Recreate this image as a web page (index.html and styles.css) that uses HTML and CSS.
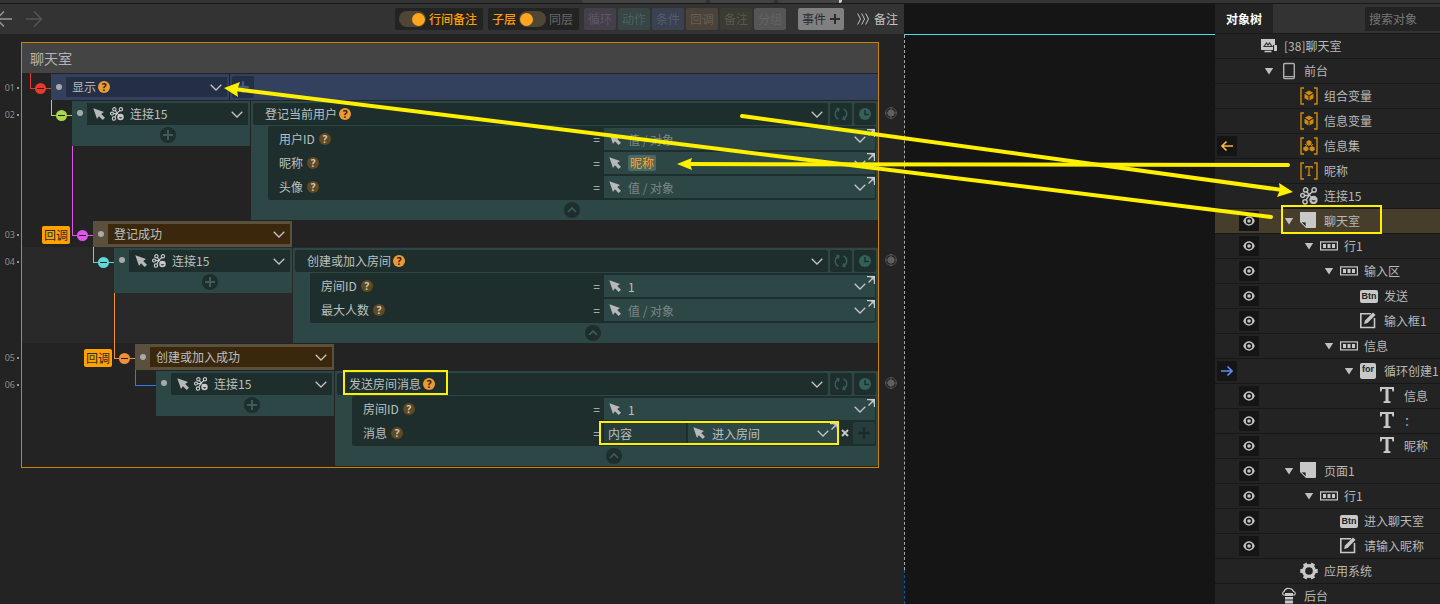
FILE: index.html
```html
<!DOCTYPE html>
<html lang="zh-CN">
<head>
<meta charset="utf-8">
<title>聊天室 - 事件编辑</title>
<link rel="stylesheet" href="styles.css">
</head>
<body>
<svg class="sprite" aria-hidden="true">
  <symbol id="chev" viewBox="0 0 12 7"><path d="M.7.8 6 6 11.300.8" fill="none" stroke="currentColor" stroke-width="1.3"/></symbol>
  <symbol id="cursor" viewBox="0 0 12 12"><path d="M.3.3 11 4 8.200 5.900 12 9.700 9.700 12 5.900 8.200 4 11Z" fill="currentColor"/></symbol>
  <symbol id="link" viewBox="0 0 16 16"><g fill="none" stroke="currentColor" stroke-width="1.300"><circle cx="5" cy="2.600" r="1.900"/><circle cx="12.500" cy="2.600" r="1.900"/><circle cx="2.300" cy="7.500" r="1.700"/><circle cx="4.500" cy="13.200" r="1.900"/><path d="M6 4 8 6.800 11.300 4M4.200 7.500H9M5.500 11.500 8.200 7"/></g><circle cx="12" cy="11.500" r="3.700" fill="currentColor"/><path d="M10 11.700Q12 14.500 14 11.700Z" fill="#222"/><path d="M8 6.500 10 9" stroke="currentColor"/></symbol>
  <symbol id="plus" viewBox="0 0 12 12"><path d="M6 1V11M1 6H11" stroke="currentColor" stroke-width="2"/></symbol>
  <symbol id="up" viewBox="0 0 16 16"><path d="M4 10 8 6l4 4" fill="none" stroke="currentColor" stroke-width="1.700"/></symbol>
  <symbol id="corner" viewBox="0 0 8 8"><path d="M0 .5H7.500V8M7 1 1.500 6.500" fill="none" stroke="currentColor" stroke-width="1.300"/><path d="M3 1H7V5Z" fill="currentColor" opacity=".6"/></symbol>
  <symbol id="loop" viewBox="0 0 14 14"><path d="M4.500 12.200A5.500 5.500 0 0 1 4 2.400M9.500 1.800A5.500 5.500 0 0 1 10 11.600M2.500 1.200 5 2 4.200 4.600M11.500 12.800 9 12 9.800 9.400" fill="none" stroke="currentColor" stroke-width="1.400"/></symbol>
  <symbol id="clock" viewBox="0 0 14 14"><circle cx="7" cy="7" r="6" fill="currentColor"/><path d="M7 3V7.500H11" fill="none" stroke="#1e2e2d" stroke-width="1.500"/></symbol>
  <symbol id="mark" viewBox="0 0 12 12"><circle cx="6" cy="6" r="5.400" fill="none" stroke="#505050"/><circle cx="6" cy="6" r="3.500" fill="#606060"/><path d="M6 0V12M0 6H12" stroke="#606060" stroke-width=".8"/></symbol>
  <symbol id="eye" viewBox="0 0 14 12"><path d="M1.200 6C3.500-.2 10.500-.2 12.800 6 10.500 12.200 3.500 12.200 1.200 6Z" fill="#c4c4c4"/><circle cx="7" cy="6" r="3.200" fill="#151515"/><circle cx="7" cy="6" r="1.800" fill="#c4c4c4"/></symbol>
  <symbol id="tri" viewBox="0 0 10 8"><path d="M.8 1H9.200L5 7.500Z" fill="#c0c0c0"/></symbol>
  <symbol id="project" viewBox="0 0 18 16"><path d="M1 1H15V7H13V12H1Z" fill="#c8c8c8"/><path d="M4 8.500 6.500 5 8 7 9.500 5 12 8.500Z" fill="none" stroke="#333" stroke-width="1.200"/><path d="M4.500 13.500H11.500" stroke="#c8c8c8" stroke-width="1.500"/><rect x="14" y="7" width="3" height="6" rx=".5" fill="#c8c8c8"/></symbol>
  <symbol id="phone" viewBox="0 0 18 18"><rect x="3.700" y="1.500" width="10.600" height="15" rx="1" fill="none" stroke="#b0b0b0" stroke-width="1.400"/><path d="M4 14.500H14" stroke="#b0b0b0"/></symbol>
  <symbol id="cubevar" viewBox="0 0 18 18"><path d="M4 1H1V17H4M14 1H17V17H14" fill="none" stroke="#d08a0c" stroke-width="1.400"/><path d="M9 3.500 13.200 5.800 9 8.200 4.800 5.800ZM4.500 6.800 8.500 9V13.500L4.500 11.300ZM13.500 6.800 9.500 9V13.500L13.500 11.300Z" fill="#d08a0c"/></symbol>
  <symbol id="setvar" viewBox="0 0 18 18"><path d="M4 1H1V17H4M14 1H17V17H14" fill="none" stroke="#d08a0c" stroke-width="1.400"/><path d="M9 3 11.500 4.500V7.500L9 9 6.500 7.500V4.500ZM6 9 8.500 10.500V13L6 14.500 3.300 13V10.500ZM12 9 14.700 10.500V13L12 14.500 9.500 13V10.500Z" fill="#d08a0c"/><path d="M7 9 5 7M11 9 13 7M9 6V8M6 12V14M12 12V14" stroke="#d08a0c"/></symbol>
  <symbol id="textvar" viewBox="0 0 18 18"><path d="M4 1H1V17H4M14 1H17V17H14" fill="none" stroke="#d08a0c" stroke-width="1.400"/><path d="M5.800 6.500V4.600H12.200V6.500M9 4.600V13.400M7.500 13.400H10.500" fill="none" stroke="#d08a0c" stroke-width="1.300"/></symbol>
  <symbol id="page" viewBox="1 1 18 18"><path d="M1 1H17V16Q17 17 16 17H7L1 11Z" fill="#c8c8c8"/><path d="M2 11H7V16Z" fill="#222" stroke="#c8c8c8" stroke-width=".8"/></symbol>
  <symbol id="rowi" viewBox="0 0 18 10"><rect x=".6" y=".9" width="16.800" height="8" fill="none" stroke="#c8c8c8" stroke-width="1.200"/><path d="M3 3H6V7H3ZM7.500 3H10.500V7H7.500ZM12 3H15V7H12Z" fill="#c8c8c8"/></symbol>
  <symbol id="edit" viewBox="1 1 18 18"><path d="M12 2.800H1.800V16.500H15.500V7" fill="none" stroke="#c8c8c8" stroke-width="1.600"/><path d="M6 9.500 14 1.500 16.500 4 8.500 12 5 13Z" fill="#c8c8c8"/></symbol>
  <symbol id="tee" viewBox="2 1 18 18"><path d="M2 1H16V5.500H14.500L13.800 3H10.500V14.800L12.500 15.500V17H5.500V15.500L7.500 14.800V3H4.200L3.500 5.500H2Z" fill="#c8c8c8"/></symbol>
  <symbol id="gear" viewBox="0 0 18 18"><g stroke="#c8c8c8" fill="none"><circle cx="9" cy="9" r="5.400" stroke-width="3.200"/><path d="M.3 9H3M15 9H17.700M4.700 1.500 6 4M13.300 1.500 12 4M4.700 16.500 6 14M13.300 16.500 12 14" stroke-width="4"/></g></symbol>
  <symbol id="server" viewBox="0 0 18 18"><path d="M5 8H3.500A2 2 0 0 1 4 4.500 4.500 4.500 0 0 1 9 1.500 4.500 4.500 0 0 1 13.500 4.500 2 2 0 0 1 14.500 8H13" fill="none" stroke="#c8c8c8" stroke-width="1.200"/><path d="M5 6H13V9H5ZM5 10H13V12.500H5ZM5 13.500H13V16.500H5Z" fill="#c8c8c8"/></symbol>
</svg>

<div class="strip"><i class="strip-a"></i><i class="strip-b"></i><i class="strip-c"></i></div>
<div class="app">
  <main class="editor">
    <div class="toolbar">
      <button class="nav back" aria-label="后退"><svg width="18" height="18" viewBox="0 0 18 18"><path d="M18 9H3M10 1.500 2.500 9 10 16.500" fill="none" stroke="currentColor" stroke-width="1.400"/></svg></button>
      <button class="nav fwd" aria-label="前进"><svg width="18" height="18" viewBox="0 0 18 18"><path d="M1 9H16M9 1.500 16.500 9 9 16.500" fill="none" stroke="currentColor" stroke-width="1.400"/></svg></button>
      <label class="switch"><input type="checkbox" checked><span class="on">行间备注</span></label>
      <label class="switch"><span class="on">子层</span><input type="checkbox"><span class="off">同层</span></label>
      <div class="kinds">
        <button class="kind k1">循环</button><button class="kind k2">动作</button><button class="kind k3">条件</button><button class="kind k4">回调</button><button class="kind k5">备注</button><button class="kind k6">分组</button>
      </div>
      <button class="add-event">事件<svg width="12" height="12"><use href="#plus"/></svg></button>
      <button class="remark"><svg width="13" height="12" viewBox="0 0 13 12"><path d="M.7.5 3.500 6 .7 11.500M4.700.5 7.500 6 4.700 11.500M8.700.5 11.500 6 8.700 11.500" fill="none" stroke="currentColor"/></svg>备注</button>
    </div>

    <section class="sheet">
      <div class="line">
        <span></span>
        <h2 class="sheet-title">聊天室</h2>
      </div>

      <div class="line">
        <span class="no">01<i></i></span>
        <div class="body">
          <div class="lead d1"><span class="elbow red"><i></i></span></div>
          <div class="stack"><div class="cell blue"><i class="dot"></i><button class="pick">显示<span class="help">?</span><svg class="chev"><use href="#chev"/></svg></button></div></div>
          <div class="rest blue"><button class="add-cond" aria-label="添加条件"><svg width="14" height="14"><use href="#plus"/></svg></button></div>
        </div>
      </div>

      <div class="line">
        <span class="no">02<i></i></span>
        <div class="body">
          <div class="lead d2"><span class="elbow green"><i></i></span></div>
          <div class="stack">
            <div class="cell teal"><i class="dot"></i><label class="pick"><svg class="cur"><use href="#cursor"/></svg><svg class="lnk"><use href="#link"/></svg><select aria-label="对象"><option>连接15</option></select><svg class="chev"><use href="#chev"/></svg></label>
              <button class="round" aria-label="添加"><svg width="12" height="12"><use href="#plus"/></svg></button></div>
            <div class="drop magenta"></div>
          </div>
          <div class="action">
            <div class="action-head"><button class="pick title">登记当前用户<span class="help">?</span><svg class="chev"><use href="#chev"/></svg></button><button class="sq" aria-label="循环"><svg width="14" height="14"><use href="#loop"/></svg></button><button class="sq" aria-label="延时"><svg width="14" height="14"><use href="#clock"/></svg></button></div>
            <div class="params">
              <div class="param"><label for="uid">用户ID</label><span class="help dim">?</span><b>=</b><div class="field"><svg class="cur"><use href="#cursor"/></svg><input id="uid" placeholder="值 / 对象"><svg class="chev"><use href="#chev"/></svg><svg class="corner"><use href="#corner"/></svg></div></div>
              <div class="param"><span>昵称</span><span class="help dim">?</span><b>=</b><div class="field"><svg class="cur"><use href="#cursor"/></svg><span class="chip">昵称</span><svg class="chev"><use href="#chev"/></svg><svg class="corner"><use href="#corner"/></svg></div></div>
              <div class="param"><label for="avatar">头像</label><span class="help dim">?</span><b>=</b><div class="field"><svg class="cur"><use href="#cursor"/></svg><input id="avatar" placeholder="值 / 对象"><svg class="chev"><use href="#chev"/></svg><svg class="corner"><use href="#corner"/></svg></div></div>
            </div>
            <div class="fold"><button class="round" aria-label="收起"><svg width="16" height="16"><use href="#up"/></svg></button></div>
          </div>
        </div>
        <svg class="mark"><use href="#mark"/></svg>
      </div>

      <div class="line">
        <span class="no">03<i></i></span>
        <div class="body">
          <div class="lead d3"><span class="tag">回调</span><span class="elbow magenta"><i></i></span></div>
          <div class="stack wide"><div class="cell brown"><i class="dot"></i><label class="pick"><select aria-label="回调事件"><option>登记成功</option></select><svg class="chev"><use href="#chev"/></svg></label></div></div>
        </div>
      </div>

      <div class="line">
        <span class="no">04<i></i></span>
        <div class="body alt">
          <div class="lead d4"><span class="elbow cyan"><i></i></span></div>
          <div class="stack">
            <div class="cell teal"><i class="dot"></i><label class="pick"><svg class="cur"><use href="#cursor"/></svg><svg class="lnk"><use href="#link"/></svg><select aria-label="对象"><option>连接15</option></select><svg class="chev"><use href="#chev"/></svg></label>
              <button class="round" aria-label="添加"><svg width="12" height="12"><use href="#plus"/></svg></button></div>
            <div class="drop orange"></div>
          </div>
          <div class="action">
            <div class="action-head"><button class="pick title">创建或加入房间<span class="help">?</span><svg class="chev"><use href="#chev"/></svg></button><button class="sq" aria-label="循环"><svg width="14" height="14"><use href="#loop"/></svg></button><button class="sq" aria-label="延时"><svg width="14" height="14"><use href="#clock"/></svg></button></div>
            <div class="params">
              <div class="param"><label for="room">房间ID</label><span class="help dim">?</span><b>=</b><div class="field"><svg class="cur"><use href="#cursor"/></svg><input id="room" value="1"><svg class="chev"><use href="#chev"/></svg><svg class="corner"><use href="#corner"/></svg></div></div>
              <div class="param"><label for="max">最大人数</label><span class="help dim">?</span><b>=</b><div class="field"><svg class="cur"><use href="#cursor"/></svg><input id="max" placeholder="值 / 对象"><svg class="chev"><use href="#chev"/></svg><svg class="corner"><use href="#corner"/></svg></div></div>
            </div>
            <div class="fold"><button class="round" aria-label="收起"><svg width="16" height="16"><use href="#up"/></svg></button></div>
          </div>
        </div>
        <svg class="mark"><use href="#mark"/></svg>
      </div>

      <div class="line">
        <span class="no">05<i></i></span>
        <div class="body">
          <div class="lead d5"><span class="tag">回调</span><span class="elbow orange"><i></i></span></div>
          <div class="stack wide"><div class="cell brown"><i class="dot"></i><label class="pick"><select aria-label="回调事件"><option>创建或加入成功</option></select><svg class="chev"><use href="#chev"/></svg></label></div></div>
        </div>
      </div>

      <div class="line">
        <span class="no">06<i></i></span>
        <div class="body last">
          <div class="lead d6"><span class="elbow azure"></span></div>
          <div class="stack">
            <div class="cell teal"><i class="dot"></i><label class="pick"><svg class="cur"><use href="#cursor"/></svg><svg class="lnk"><use href="#link"/></svg><select aria-label="对象"><option>连接15</option></select><svg class="chev"><use href="#chev"/></svg></label>
              <button class="round" aria-label="添加"><svg width="12" height="12"><use href="#plus"/></svg></button></div>
          </div>
          <div class="action">
            <div class="action-head"><button class="pick title">发送房间消息<span class="help">?</span><svg class="chev"><use href="#chev"/></svg></button><button class="sq" aria-label="循环"><svg width="14" height="14"><use href="#loop"/></svg></button><button class="sq" aria-label="延时"><svg width="14" height="14"><use href="#clock"/></svg></button></div>
            <div class="params">
              <div class="param"><label for="room2">房间ID</label><span class="help dim">?</span><b>=</b><div class="field"><svg class="cur"><use href="#cursor"/></svg><input id="room2" value="1"><svg class="chev"><use href="#chev"/></svg><svg class="corner"><use href="#corner"/></svg></div></div>
              <div class="param"><label for="msg">消息</label><span class="help dim">?</span><b>=</b><div class="pair"><input class="key" aria-label="键" value="内容"><div class="field"><svg class="cur"><use href="#cursor"/></svg><input id="msg" value="进入房间"><svg class="chev"><use href="#chev"/></svg><svg class="corner"><use href="#corner"/></svg></div><button class="del" aria-label="删除"><svg width="8" height="8" viewBox="0 0 8 8"><path d="M1 1 7 7M7 1 1 7" stroke="currentColor" stroke-width="2"/></svg></button><button class="more" aria-label="添加"><svg width="14" height="14"><use href="#plus"/></svg></button></div></div>
            </div>
            <div class="fold"><button class="round" aria-label="收起"><svg width="16" height="16"><use href="#up"/></svg></button></div>
          </div>
        </div>
        <svg class="mark"><use href="#mark"/></svg>
      </div>
    </section>
  </main>

  <div class="stage"><div class="ruler"></div><div class="view"><i></i><i></i></div></div>

  <aside class="tree">
    <div class="tree-head"><h3>对象树</h3><input type="search" aria-label="搜索对象" placeholder="搜索对象"></div>
    <ul>
      <li><span class="slot"></span><span class="slot"></span><svg class="ic"><use href="#project"/></svg>[38]聊天室</li>
      <li class="t1"><span class="slot"></span><span class="slot"></span><svg class="tri"><use href="#tri"/></svg><svg class="ic"><use href="#phone"/></svg>前台</li>
      <li class="t2"><span class="slot"></span><span class="slot"></span><span class="tri"></span><svg class="ic"><use href="#cubevar"/></svg>组合变量</li>
      <li class="t2"><span class="slot"></span><span class="slot"></span><span class="tri"></span><svg class="ic"><use href="#cubevar"/></svg>信息变量</li>
      <li class="t2"><button class="slot box" aria-label="读取"><svg width="14" height="12" viewBox="0 0 14 12"><path d="M13 6H2M6.500 1.500 2 6 6.500 10.500" fill="none" stroke="#ffb443" stroke-width="1.700"/></svg></button><span class="slot"></span><span class="tri"></span><svg class="ic"><use href="#setvar"/></svg>信息集</li>
      <li class="t2"><span class="slot"></span><span class="slot"></span><span class="tri"></span><svg class="ic"><use href="#textvar"/></svg>昵称</li>
      <li class="t2"><span class="slot"></span><span class="slot"></span><span class="tri"></span><svg class="ic pale"><use href="#link"/></svg>连接15</li>
      <li class="t2 sel"><span class="slot"></span><button class="slot box" aria-label="显示"><svg class="eye"><use href="#eye"/></svg></button><svg class="tri"><use href="#tri"/></svg><svg class="ic"><use href="#page"/></svg>聊天室</li>
      <li class="t3"><span class="slot"></span><button class="slot box" aria-label="显示"><svg class="eye"><use href="#eye"/></svg></button><svg class="tri"><use href="#tri"/></svg><svg class="ic"><use href="#rowi"/></svg>行1</li>
      <li class="t4"><span class="slot"></span><button class="slot box" aria-label="显示"><svg class="eye"><use href="#eye"/></svg></button><svg class="tri"><use href="#tri"/></svg><svg class="ic"><use href="#rowi"/></svg>输入区</li>
      <li class="t5"><span class="slot"></span><button class="slot box" aria-label="显示"><svg class="eye"><use href="#eye"/></svg></button><span class="tri"></span><span class="ic word">Btn</span>发送</li>
      <li class="t5"><span class="slot"></span><button class="slot box" aria-label="显示"><svg class="eye"><use href="#eye"/></svg></button><span class="tri"></span><svg class="ic"><use href="#edit"/></svg>输入框1</li>
      <li class="t4"><span class="slot"></span><button class="slot box" aria-label="显示"><svg class="eye"><use href="#eye"/></svg></button><svg class="tri"><use href="#tri"/></svg><svg class="ic"><use href="#rowi"/></svg>信息</li>
      <li class="t5"><button class="slot box" aria-label="写入"><svg width="14" height="12" viewBox="0 0 14 12"><path d="M1 6H12M7.500 1.500 12 6 7.500 10.500" fill="none" stroke="#5a8df0" stroke-width="1.700"/></svg></button><span class="slot"></span><svg class="tri"><use href="#tri"/></svg><span class="ic word tall">for</span>循环创建1</li>
      <li class="t6"><span class="slot"></span><button class="slot box" aria-label="显示"><svg class="eye"><use href="#eye"/></svg></button><span class="tri"></span><svg class="ic"><use href="#tee"/></svg>信息</li>
      <li class="t6"><span class="slot"></span><button class="slot box" aria-label="显示"><svg class="eye"><use href="#eye"/></svg></button><span class="tri"></span><svg class="ic"><use href="#tee"/></svg>：</li>
      <li class="t6"><span class="slot"></span><button class="slot box" aria-label="显示"><svg class="eye"><use href="#eye"/></svg></button><span class="tri"></span><svg class="ic"><use href="#tee"/></svg>昵称</li>
      <li class="t2"><span class="slot"></span><button class="slot box" aria-label="显示"><svg class="eye"><use href="#eye"/></svg></button><svg class="tri"><use href="#tri"/></svg><svg class="ic"><use href="#page"/></svg>页面1</li>
      <li class="t3"><span class="slot"></span><button class="slot box" aria-label="显示"><svg class="eye"><use href="#eye"/></svg></button><svg class="tri"><use href="#tri"/></svg><svg class="ic"><use href="#rowi"/></svg>行1</li>
      <li class="t4"><span class="slot"></span><button class="slot box" aria-label="显示"><svg class="eye"><use href="#eye"/></svg></button><span class="tri"></span><span class="ic word">Btn</span>进入聊天室</li>
      <li class="t4"><span class="slot"></span><button class="slot box" aria-label="显示"><svg class="eye"><use href="#eye"/></svg></button><span class="tri"></span><svg class="ic"><use href="#edit"/></svg>请输入昵称</li>
      <li class="t2"><span class="slot"></span><span class="slot"></span><span class="tri"></span><svg class="ic"><use href="#gear"/></svg>应用系统</li>
      <li class="t1"><span class="slot"></span><span class="slot"></span><span class="tri"></span><svg class="ic"><use href="#server"/></svg>后台</li>
    </ul>
  </aside>
</div>

<svg class="notes" viewBox="0 0 1440 604" preserveAspectRatio="none" aria-hidden="true">
  <g stroke="#fff000" stroke-width="4" stroke-linecap="round"><path d="M1271 217 234 89"/><path d="M742 116 1282 190"/><path d="M1288 165 686 164"/></g>
  <g fill="#fff000"><path d="M224 88 240 82 237 90 238 97Z"/><path d="M1293 192 1277 197 1280 190 1279 183Z"/><path d="M677 164 692 158 690 164 692 170Z"/></g>
  <g fill="none" stroke="#fff000" stroke-width="2"><rect x="344" y="371" width="103" height="23"/><rect x="600" y="422" width="238" height="22"/><rect x="1282" y="206" width="99" height="27"/></g>
</svg>
</body>
</html>
```

FILE: styles.css
```css
* { box-sizing: border-box; }
body {
  margin: 0;
  height: 100vh;
  display: flex;
  flex-direction: column;
  overflow: hidden;
  background: #232323;
  color: #b8b8b8;
  font: 12px/16px "Noto Sans CJK SC", "Noto Sans", sans-serif;
}
button, input, select { font: inherit; color: inherit; border: 0; padding: 0; margin: 0; background: none; border-radius: 0; outline: 0; }
select { appearance: none; }
ul, h2, h3 { margin: 0; padding: 0; list-style: none; font-weight: 400; }
svg { flex: none; display: block; }
.sprite { position: absolute; width: 0; height: 0; }
.notes { position: absolute; top: 0; left: 0; width: 100%; height: 604px; pointer-events: none; }

.strip { flex: none; display: flex; gap: 4px; height: 4px; padding-left: 582px; background: #333; border-bottom: 1px solid #191919; }
.strip i { background: #444; border-radius: 0 0 2px 2px; }
.strip-a { width: 124px; }
.strip-b { width: 64px; }
.strip-c { width: 64px; border-right: 3px solid #ccc; }

.app { flex: 1; min-height: 0; display: flex; }
.editor { flex: 904 1 0; min-width: 0; }

.toolbar { display: flex; align-items: center; height: 30px; padding-right: 6px; background: #333; }
.nav { display: flex; }
.back { margin-left: -6px; color: #999; }
.fwd { margin: 0 auto 0 13px; color: #555; }
.switch { display: flex; align-items: center; gap: 3px; height: 22px; padding: 0 6px 0 4px; margin-right: 5px; background: #232323; border-radius: 2px; }
.switch input { appearance: none; display: flex; align-items: center; width: 27px; height: 16px; padding: 0 1px; border-radius: 8px; background: #4f4636; }
.switch input::before { content: ""; width: 13px; height: 13px; border-radius: 50%; background: #ffa51e; }
.switch input:checked { justify-content: flex-end; }
.on { color: #ffa000; font-weight: 500; }
.off { color: #6a6a6a; }
.kinds { display: flex; gap: 2px; }
.kind { width: 32px; height: 22px; border-radius: 2px; }
.k1 { background: #453f4b; color: #5d5664; }
.k2 { background: #374544; color: #50605f; }
.k3 { background: #3a4150; color: #545d70; }
.k4 { background: #4b423a; color: #685d52; }
.k5 { background: #3b3a33; color: #5a584d; }
.k6 { background: #555; color: #636363; }
.add-event { display: flex; align-items: center; gap: 3px; width: 46px; height: 22px; margin-left: 12px; padding-left: 4px; border-radius: 2px; background: #808080; color: #2c2c2c; }
.remark { display: flex; align-items: center; gap: 4px; margin-left: 13px; color: #c4c4c4; }

.sheet { padding-top: 8px; }
.line { display: grid; grid-template-columns: 21px minmax(0, 1fr) 25px; align-items: start; }
.sheet-title { height: 31px; padding: 0 8px; border: 1px solid #c98500; border-bottom: 0; background: #444; color: #b4b4b4; font-size: 14px; line-height: 30px; }
.no { display: flex; align-items: center; justify-content: flex-end; gap: 2px; height: 27px; padding: 2px 2px 0 0; color: #8c8c8c; font: 9px/12px "Noto Sans", sans-serif; }
.no i { width: 2px; height: 2px; background: #999; }
.body { display: flex; border: solid #c98500; border-width: 0 1px; }
.alt { background: #292929; }
.last { padding-bottom: 1px; border-bottom-width: 1px; }

.lead { flex: none; display: flex; justify-content: flex-end; }
.d1 { width: 29px; }
.d2 { width: 50px; }
.d3 { width: 71px; }
.d4 { width: 92px; }
.d5 { width: 113px; }
.d6 { width: 134px; }
.tag { height: 18px; margin: 6px 2px 0 0; padding: 0 2px; border-radius: 2px; background: #ffa200; color: #2b2b2b; line-height: 18px; }
.elbow { position: relative; width: 21px; height: 16px; border: solid; border-width: 0 0 1px 1px; }
.elbow i { position: absolute; left: 4px; bottom: -6px; width: 11px; height: 11px; border-radius: 50%; background: currentColor; }
.elbow i::after { content: ""; position: absolute; left: 2px; top: 5px; width: 7px; height: 1px; background: #222; }
.red { color: #e8392c; }
.green { color: #a9d94a; }
.magenta { color: #df55ea; }
.cyan { color: #5fd9dc; }
.orange { color: #f09038; }
.azure { color: #3478e8; }

.stack { flex: none; display: flex; flex-direction: column; width: 178px; margin: 1px 1px 0 0; }
.wide { width: 199px; }
.drop { flex: 1; border-left: 1px solid; }
.cell { display: grid; grid-template-columns: 15px minmax(0, 1fr); align-items: center; padding-right: 2px; }
.dot { justify-self: center; width: 6px; height: 6px; border-radius: 50%; background: #aaa; }
.pick { display: flex; align-items: center; height: 20px; padding: 0 5px 0 6px; text-align: left; }
.pick select { flex: 1; min-width: 0; height: 20px; color: #bcc0bf; }
.blue { background: #33415e; }
.blue .pick { background: #242e44; }
.brown { background: #5b4f3d; }
.brown .pick { background: #3a270c; }
.blue .pick, .brown .pick { margin: 3px 0; }
.teal { background: #2d4746; }
.teal .pick { height: 22px; margin: 2px 0 0; background: #1e2e2d; }
.cur { width: 12px; height: 12px; color: #b8b8b8; }
.teal .lnk { width: 14px; height: 14px; margin: 0 6px 0 5px; color: #c8c8c8; }
.chev { width: 12px; height: 7px; margin-left: auto; color: #c4c4c4; }
.help { width: 12px; height: 12px; margin-left: 2px; border-radius: 50%; background: #eb9a34; color: #2b2008; font: bold 10px/12px "Noto Sans", sans-serif; text-align: center; }
.dim { margin-left: 4px; background: #62491f; color: #c8c8c8; }
.round { display: flex; align-items: center; justify-content: center; width: 16px; height: 16px; border-radius: 50%; background: #1e2e2d; color: #3d5c5a; }
.cell .round { grid-column: 1 / -1; justify-self: center; margin: 2px 0 3px 16px; }
.rest { flex: 1; margin-top: 1px; padding: 2px; }
.add-cond { display: flex; align-items: center; justify-content: center; width: 22px; height: 22px; border-radius: 2px; background: #242e44; color: #465a84; }

.action { flex: 1; min-width: 0; margin-top: 1px; padding: 2px 2px 0; background: #2d4746; }
.action-head { display: flex; gap: 2px; }
.title { flex: 1; height: 22px; padding-left: 12px; border-radius: 2px; background: #1e2e2d; color: #bcc0bf; }
.sq { display: flex; align-items: center; justify-content: center; width: 22px; height: 22px; border-radius: 2px; background: #1e2e2d; color: #33605c; }
.params { display: grid; gap: 2px; margin: 1px 0 0 15px; padding: 2px 1px 2px 11px; border-radius: 2px; background: #1e2e2d; }
.param { display: flex; align-items: center; color: #bcc0bf; }
.param b { margin: 0 4px 0 auto; font-weight: 400; }
.field { position: relative; display: flex; align-items: center; width: 271px; height: 22px; padding: 0 9px 0 5px; background: #2d4746; }
.field input { flex: 1; width: 0; min-width: 0; height: 22px; margin-left: 7px; }
.field input::placeholder { color: #7c8685; opacity: 1; }
.corner { position: absolute; top: 1px; right: 0; width: 8px; height: 8px; color: #ccc; }
.chip { margin-left: 7px; padding: 0 2px; border-radius: 2px; background: #4d6764; color: #ffa51e; }
.pair { display: flex; align-items: center; width: 271px; }
.key { width: 82px; height: 22px; margin-right: 2px; padding-left: 4px; background: #273d3c; }
.pair .field { flex: 1; width: auto; min-width: 0; }
.del { margin: 0 4px 0 3px; color: #c4c4c4; }
.more { display: flex; align-items: center; justify-content: center; width: 22px; height: 22px; border-radius: 2px; background: #273d3c; color: #1a2a29; }
.fold { display: flex; justify-content: center; margin-left: 15px; padding: 2px 0; }
.mark { width: 12px; height: 12px; margin: 7px 0 0 6px; }

.stage { flex: 311 1 0; display: flex; flex-direction: column; background: #151515; }
.ruler { height: 31px; border-bottom: 1px solid #46e0e6; }
.view { flex: 1; display: flex; flex-direction: column; width: 1px; }
.view i { flex: 1; border-left: 1px dashed #a8a8a8; }
.view i + i { flex: none; height: 34px; border-color: #0d5aa8; }

.tree { flex: none; width: 225px; overflow: hidden; background: #232323; }
.tree-head { display: flex; justify-content: space-between; align-items: center; height: 30px; background: #333; border-bottom: 1px solid #191919; }
.tree-head h3 { align-self: stretch; padding: 0 11px; background: #232323; color: #fff; font-size: 12px; font-weight: 700; line-height: 30px; }
.tree-head input { width: 75px; height: 24px; padding-left: 4px; background: #232323; }
.tree-head input::placeholder { color: #777; opacity: 1; }
.tree li { display: flex; align-items: center; height: 25px; padding-left: 2px; border-bottom: 1px solid #171717; white-space: nowrap; }
.slot { flex: none; display: flex; align-items: center; justify-content: center; width: 20px; height: 20px; margin-right: 2px; }
.slot + .slot { margin-right: 1px; }
.box { background: #151515; }
.eye { width: 14px; height: 12px; }
.tri { width: 18px; height: 8px; margin-right: 2px; flex: none; }
.ic { width: 18px; height: 18px; margin-right: 6px; flex: none; }
.pale { color: #c0c0c0; }
.word { height: 13px; border-radius: 2px; background: #c8c8c8; color: #222; font: bold 9px/13px "Liberation Sans", sans-serif; text-align: center; }
.tall { width: 16px; height: 16px; margin-right: 8px; }
.t2 .tri { margin-left: 20px; }
.t3 .tri { margin-left: 40px; }
.t4 .tri { margin-left: 60px; }
.t5 .tri { margin-left: 80px; }
.t6 .tri { margin-left: 100px; }
.sel { background: #463e2a; }
```
